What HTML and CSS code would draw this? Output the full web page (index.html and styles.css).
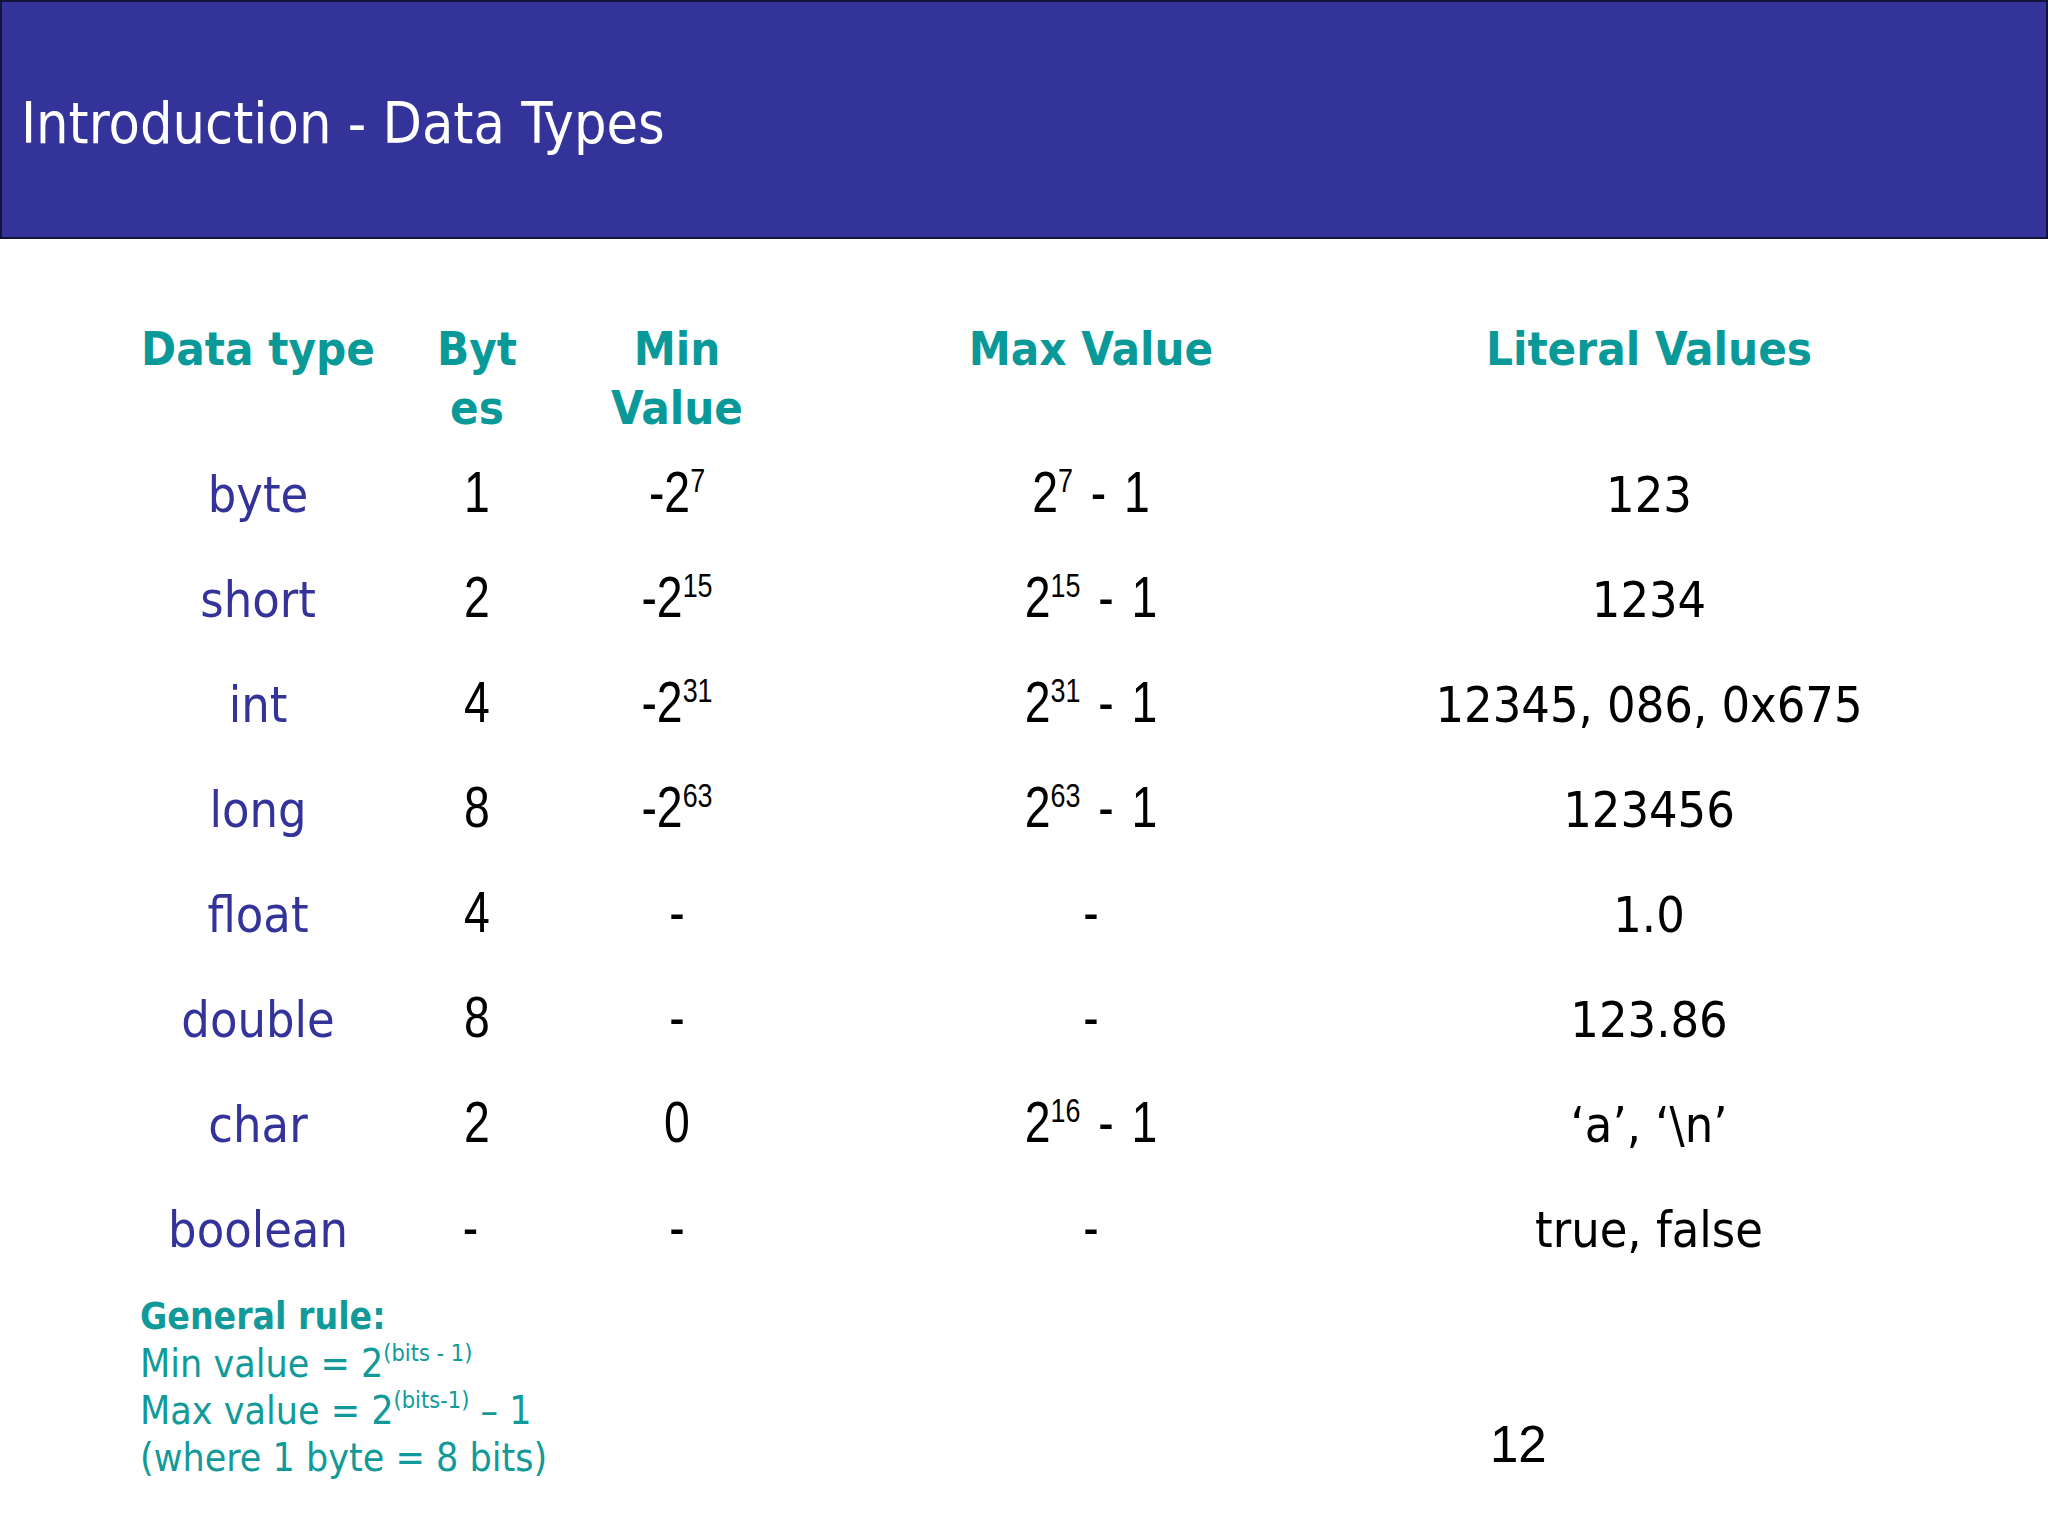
FILE: index.html
```html
<!DOCTYPE html>
<html lang="en">
<head>
<meta charset="utf-8">
<title>Introduction - Data Types</title>
<link rel="stylesheet" href="styles.css">
</head>
<body>
<div class="slide">
  <header class="title-bar">
    <h1 class="title">Introduction - Data Types</h1>
  </header>

  <section class="types">
    <div class="th">Data type</div>
    <div class="th">Byt<br>es</div>
    <div class="th">Min<br>Value</div>
    <div class="th">Max Value</div>
    <div class="th">Literal Values</div>

    <div class="name">byte</div>
    <div class="num">1</div>
    <div class="num">-2<sup>7</sup></div>
    <div class="num">2<sup>7</sup> <span class="minus">-</span> 1</div>
    <div class="lit">123</div>

    <div class="name">short</div>
    <div class="num">2</div>
    <div class="num">-2<sup>15</sup></div>
    <div class="num">2<sup>15</sup> <span class="minus">-</span> 1</div>
    <div class="lit">1234</div>

    <div class="name">int</div>
    <div class="num">4</div>
    <div class="num">-2<sup>31</sup></div>
    <div class="num">2<sup>31</sup> <span class="minus">-</span> 1</div>
    <div class="lit">12345, 086, 0x675</div>

    <div class="name">long</div>
    <div class="num">8</div>
    <div class="num">-2<sup>63</sup></div>
    <div class="num">2<sup>63</sup> <span class="minus">-</span> 1</div>
    <div class="lit">123456</div>

    <div class="name">float</div>
    <div class="num">4</div>
    <div class="num">-</div>
    <div class="num">-</div>
    <div class="lit">1.0</div>

    <div class="name">double</div>
    <div class="num">8</div>
    <div class="num">-</div>
    <div class="num">-</div>
    <div class="lit">123.86</div>

    <div class="name">char</div>
    <div class="num">2</div>
    <div class="num">0</div>
    <div class="num">2<sup>16</sup> <span class="minus">-</span> 1</div>
    <div class="lit">‘a’, ‘\n’</div>

    <div class="name">boolean</div>
    <div class="num dash-left">-</div>
    <div class="num">-</div>
    <div class="num">-</div>
    <div class="lit">true, false</div>
  </section>

  <footer class="footer">
    <div class="rule">
      <div class="rule-title">General rule:</div>
      <div class="rule-line">Min value = 2<sup>(bits - 1)</sup></div>
      <div class="rule-line">Max value = 2<sup>(bits-1)</sup> – 1</div>
      <div class="rule-line">(where 1 byte = 8 bits)</div>
    </div>
    <div class="page-num">12</div>
  </footer>
</div>
</body>
</html>
```

FILE: styles.css
```css
html, body {
  margin: 0;
  padding: 0;
  background: #ffffff;
}

.slide {
  width: 2048px;
  height: 1536px;
  overflow: hidden;
  font-family: "DejaVu Sans Condensed", "DejaVu Sans", sans-serif;
  font-stretch: condensed;
}

.title-bar {
  box-sizing: border-box;
  height: 239px;
  background: #343399;
  border: 2px solid #14143a;
  display: flex;
  align-items: flex-start;
}

.title {
  margin: 0;
  padding: 81px 0 0 19px;
  font-weight: normal;
  font-size: 57px;
  line-height: 80px;
  color: #ffffff;
}

.types {
  margin-top: 80px;
  padding-left: 140px;
  display: grid;
  grid-template-columns: 236px 202px 198px 630px 486px;
  grid-template-rows: 143px repeat(7, 105px) auto;
  align-items: baseline;
  text-align: center;
}

.th {
  font-weight: bold;
  font-size: 47px;
  line-height: 59px;
  color: #0a9999;
  white-space: nowrap;
  align-self: start;
}

.name {
  font-size: 50px;
  line-height: 60px;
  color: #333399;
}

.num {
  font-family: "Liberation Sans", Arial, sans-serif;
  font-size: 58px;
  line-height: 60px;
  color: #000000;
  transform: scaleX(0.8);
}

.num sup {
  font-size: 0.58em;
  line-height: 0;
  vertical-align: 0.6em;
}

.minus {
  padding: 0 6px;
}

.dash-left {
  padding-right: 16px;
}

.lit {
  font-size: 50px;
  line-height: 60px;
  color: #000000;
}

.footer {
  margin-top: 33px;
  padding-left: 140px;
  display: grid;
  grid-template-columns: 1350px auto;
  align-items: end;
}

.rule {
  color: #119a99;
  font-size: 39px;
  line-height: 47px;
}

.rule-title {
  font-weight: bold;
  font-size: 37px;
}

.rule sup {
  font-size: 0.6em;
  line-height: 0;
  vertical-align: 0.7em;
}

.page-num {
  font-family: "Liberation Sans", Arial, sans-serif;
  font-size: 51px;
  line-height: 54px;
  color: #000000;
  margin-bottom: 9px;
}
```
